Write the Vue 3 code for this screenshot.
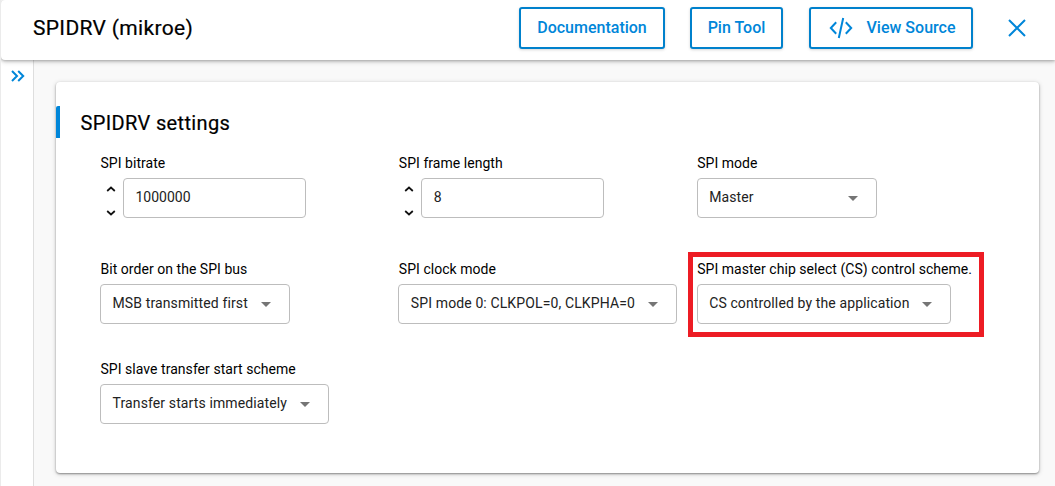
<script setup>
const fields = [
  { label: 'SPI bitrate', value: '1000000', type: 'number' },
  { label: 'SPI frame length', value: '8', type: 'number' },
  { label: 'SPI mode', value: 'Master', type: 'select', size: 'w-mode' },
  { label: 'Bit order on the SPI bus', value: 'MSB transmitted first', type: 'select', size: 'w-order' },
  { label: 'SPI clock mode', value: 'SPI mode 0: CLKPOL=0, CLKPHA=0', type: 'select', size: 'w-clock' },
  { label: 'SPI master chip select (CS) control scheme.', value: 'CS controlled by the application', type: 'select', size: 'w-cs', marked: true },
  { label: 'SPI slave transfer start scheme', value: 'Transfer starts immediately', type: 'select', size: 'w-slave' },
]
</script>

<template>
  <div class="page">
    <header class="topbar">
      <h1>SPIDRV (mikroe)</h1>
      <button class="btn doc">Documentation</button>
      <button class="btn pin">Pin Tool</button>
      <button class="btn src">
        <svg width="24" height="22" viewBox="0 0 24 22">
          <path d="M7.2 5.2 1.8 11l5.4 5.8M16.8 5.2l5.4 5.8-5.4 5.8M14.2 1 9.8 21" />
        </svg>
        <span>View Source</span>
      </button>
      <button class="close" aria-label="Close">
        <svg width="18" height="18" viewBox="0 0 18 18"><path d="M1 1l16 16M17 1L1 17" /></svg>
      </button>
    </header>
    <div class="body">
      <aside class="rail">
        <svg width="14" height="12" viewBox="0 0 14 12"><path d="M1 1l5 5-5 5M7.2 1l5 5-5 5" /></svg>
      </aside>
      <main class="content">
        <section class="card">
          <h2>SPIDRV settings</h2>
          <div class="grid">
            <div v-for="f in fields" :key="f.label" class="field" :class="{ marked: f.marked }">
              <label>{{ f.label }}</label>
              <div v-if="f.type === 'number'" class="number">
                <div class="steps">
                  <svg width="10" height="6" viewBox="0 0 10 6"><path d="M1.2 5 5 1.5 8.8 5" /></svg>
                  <svg width="10" height="6" viewBox="0 0 10 6"><path d="M1.2 1 5 4.5 8.8 1" /></svg>
                </div>
                <div class="box input">{{ f.value }}</div>
              </div>
              <div v-else class="box select" :class="f.size">
                <span>{{ f.value }}</span>
                <svg width="10" height="5" viewBox="0 0 10 5"><path d="M0 0h10L5 5z" /></svg>
              </div>
            </div>
          </div>
        </section>
      </main>
    </div>
  </div>
</template>

<style>
body { margin: 0; overflow: hidden; }
</style>

<style scoped>
* { box-sizing: border-box; }
.page {
  width: 1055px; height: 486px; overflow: hidden;
  display: flex; flex-direction: column;
  border-left: 1px solid #ebebeb;
  background: #f9f9f9; color: #000;
  font-family: Roboto, "Liberation Sans", sans-serif;
}
.topbar {
  position: relative; z-index: 1; flex: none;
  height: 60px; display: flex; align-items: center;
  padding: 0 29px 4px 32px;
  background: #fff; border-radius: 4px 0 0 4px;
  box-shadow: 0 1px 3px rgba(0, 0, 0, .24), 0 2px 5px rgba(0, 0, 0, .16);
}
h1 {
  margin: 0 auto 0 0; font-size: 21px; font-weight: 400; line-height: 24px; letter-spacing: .32px;
  -webkit-text-stroke: .2px #000;
}
.btn {
  height: 42px; padding: 0; flex: none;
  display: flex; align-items: center; justify-content: center;
  border: 2px solid #0081cc; border-radius: 3px; background: #fff; color: #0086d9;
  font: 500 16px/20px Roboto, "Liberation Sans", sans-serif;
  box-shadow: 0 1px 3px rgba(0, 0, 0, .16);
}
.doc { width: 146px; margin-right: 25px; }
.pin { width: 93px; margin-right: 26px; }
.src { width: 164px; gap: 14px; }
.src svg { margin-left: 2px; }
.btn svg, .close svg, .rail svg { fill: none; stroke: #0086d9; stroke-width: 2; }
.close { width: 18px; height: 18px; margin-left: 35px; padding: 0; border: 0; background: none; display: flex; }
.body { flex: 1; display: flex; min-height: 0; }
.rail { width: 33px; flex: none; padding: 10px 0 0 9.5px; background: #fff; border-right: 1px solid #dedede; }
.rail svg { display: block; }
.content { flex: 1; padding: 22px 16px 13px 22px; }
.card {
  height: 391px; padding-top: 24px;
  background: #fff; border-radius: 4px;
  box-shadow: 0 1px 2px rgba(0, 0, 0, .38), 0 1px 5px rgba(0, 0, 0, .18);
}
h2 {
  margin: 0; height: 32px; padding-left: 20.6px;
  border-left: 4px solid #0086d9; border-radius: 2px 0 0 0;
  font-size: 20px; font-weight: 400; line-height: 34px; letter-spacing: .35px;
  -webkit-text-stroke: .2px #000;
}
.grid {
  display: grid; grid-template-columns: repeat(3, 1fr);
  grid-template-rows: 106px 100px 65px;
  padding: 15px 44px 0;
}
.field { position: relative; display: flex; flex-direction: column; align-items: flex-start; }
label { flex: none; height: 25px; padding-left: .5px; font-size: 14px; line-height: 20px; letter-spacing: .04px; white-space: nowrap; }
.number { display: flex; }
.steps { width: 23px; height: 40px; padding: 8px 6px 2px 6px; display: flex; flex-direction: column; justify-content: space-between; }
.steps svg { fill: none; stroke: #111; stroke-width: 1.7; }
.box {
  height: 40px; padding: 0 11.5px 2px; display: flex; align-items: center;
  border: 1px solid #bdbdbd; border-radius: 4px; background: #fff; color: #222;
  font-size: 14px; line-height: 36px; letter-spacing: .12px; white-space: nowrap;
}
.input { width: 183px; letter-spacing: 0; }
.select { justify-content: space-between; padding-right: 18px; }
.select svg { fill: #757575; position: relative; top: 1px; }
.w-mode { width: 180px; }
.w-order { width: 190px; }
.w-clock { width: 279px; }
.w-cs { width: 254px; }
.w-slave { width: 229px; }
.marked::after {
  content: ''; position: absolute; left: -9px; top: -7px; box-sizing: border-box;
  width: 296px; height: 85px; border: 5px solid #ed1c24;
}
</style>
